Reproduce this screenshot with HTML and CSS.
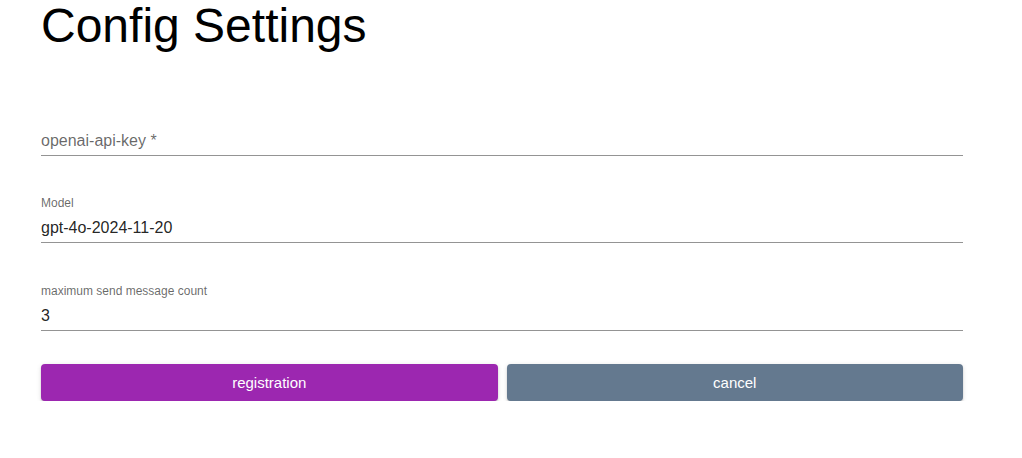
FILE: index.html
```html
<!DOCTYPE html>
<html lang="en">
<head>
<meta charset="utf-8">
<title>Config Settings</title>
<link rel="stylesheet" href="styles.css">
</head>
<body>
<main class="page">
  <h1 class="title">Config Settings</h1>
  <form class="form">
    <div class="field">
      <span class="label"></span>
      <input class="input" type="text" placeholder="openai-api-key *">
    </div>
    <div class="field field-mid">
      <span class="label">Model</span>
      <input class="input" type="text" value="gpt-4o-2024-11-20">
    </div>
    <div class="field field-last">
      <span class="label">maximum send message count</span>
      <input class="input" type="text" value="3">
    </div>
    <div class="actions">
      <button type="button" class="btn btn-primary">registration</button>
      <button type="button" class="btn btn-secondary">cancel</button>
    </div>
  </form>
</main>
</body>
</html>
```
FILE: styles.css
```css
html, body {
  margin: 0;
  padding: 0;
  background: #fff;
}
body {
  font-family: "Liberation Sans", Arial, sans-serif;
  color: rgba(0, 0, 0, 0.87);
}
.page {
  width: 922px;
  padding: 0 0 0 41px;
}
.title {
  margin: 0;
  font-size: 48px;
  font-weight: 400;
  line-height: 51px;
  color: #000;
}
.form {
  display: flex;
  flex-direction: column;
  margin-top: 57px;
}
.field {
  display: flex;
  flex-direction: column;
  margin-bottom: 39px;
}
.field-mid {
  margin-bottom: 40px;
}
.field-last {
  margin-bottom: 33px;
}
.label {
  height: 16px;
  font-size: 12px;
  line-height: 16px;
  color: rgba(0, 0, 0, 0.6);
}
.input {
  box-sizing: border-box;
  height: 32px;
  margin: 0;
  padding: 5px 0 3px;
  border: none;
  border-bottom: 1px solid rgba(0, 0, 0, 0.42);
  outline: none;
  font-family: "Liberation Sans", Arial, sans-serif;
  font-size: 16px;
  line-height: 23px;
  color: rgba(0, 0, 0, 0.87);
  background: transparent;
}
.input::placeholder {
  color: rgba(0, 0, 0, 0.6);
  opacity: 1;
}
.actions {
  display: flex;
  gap: 9px;
}
.btn {
  flex: 1;
  height: 37px;
  border: none;
  border-radius: 4px;
  font-family: "Liberation Sans", Arial, sans-serif;
  font-size: 15px;
  color: #fff;
  cursor: pointer;
  box-shadow: 0 3px 1px -2px rgba(0,0,0,.2), 0 2px 2px 0 rgba(0,0,0,.14), 0 1px 5px 0 rgba(0,0,0,.12);
}
.btn-primary {
  background: #9c27b0;
}
.btn-secondary {
  background: #64798f;
}
```
